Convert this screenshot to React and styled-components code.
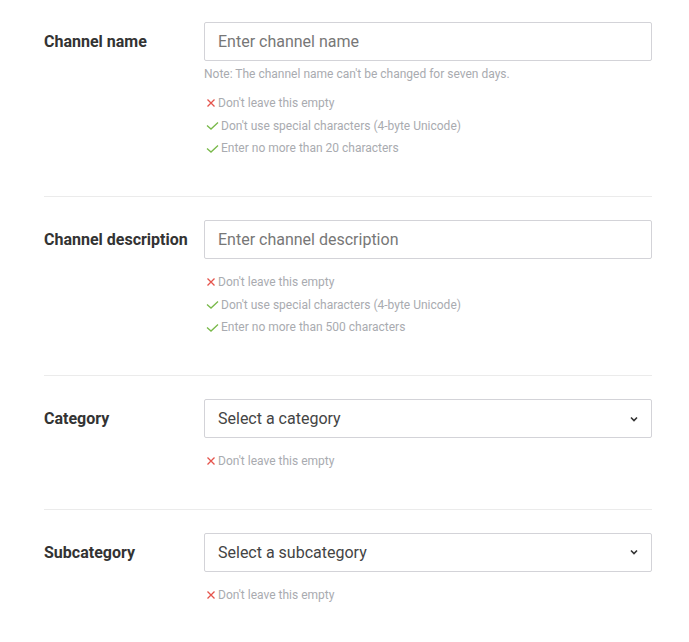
import styled, { createGlobalStyle } from "styled-components";

const Global = createGlobalStyle`
  body {
    margin: 0;
    background: #fff;
    font-family: Roboto, "Liberation Sans", sans-serif;
  }
`;

const Form = styled.div`
  padding: 0 37px 0 44px;
`;

const Section = styled.div`
  display: grid;
  grid-template-columns: 160px 1fr;
  padding: 23px 0 36px;
  border-bottom: 1px solid #ebebeb;
  &:first-child {
    padding-top: 22px;
  }
  &:last-child {
    border-bottom: none;
  }
`;

const Label = styled.div`
  height: 39px;
  display: flex;
  align-items: center;
  font-size: 16px;
  font-weight: 700;
  color: #333;
`;

const Field = styled.div`
  display: flex;
  flex-direction: column;
`;

const Box = styled.div`
  height: 39px;
  box-sizing: border-box;
  border: 1px solid #d3d3d8;
  border-radius: 2px;
  display: flex;
  align-items: center;
  justify-content: space-between;
  padding: 0 13px;
  font-size: 16px;
  color: ${(p) => (p.$select ? "#444" : "#777")};
`;

const Note = styled.div`
  margin-top: 3px;
  font-size: 12px;
  line-height: 20px;
  color: #a9abb0;
`;

const Rules = styled.ul`
  list-style: none;
  margin: ${(p) => (p.$afterNote ? "8px" : "12px")} 0 0;
  padding: 0;
`;

const Rule = styled.li`
  display: flex;
  align-items: center;
  gap: 2px;
  font-size: 12px;
  line-height: 22.67px;
  color: #a9abb0;
`;

const Mark = styled.svg`
  width: ${(p) => p.$w}px;
  height: 10px;
  margin-left: 2px;
  flex: none;
`;

const Cross = () => (
  <Mark $w={10} viewBox="0 0 10 10">
    <path d="M1.5 1.5 L8.5 8.5 M8.5 1.5 L1.5 8.5" stroke="#e5534b" strokeWidth="1.3" fill="none" />
  </Mark>
);

const Check = () => (
  <Mark $w={13} viewBox="0 0 13 10">
    <path d="M1 4.5 L5 8 L12 1.5" stroke="#79b94a" strokeWidth="1.3" fill="none" />
  </Mark>
);

const Chevron = () => (
  <svg width="8" height="6" viewBox="0 0 8 6">
    <path d="M1 1.5 L4 4.5 L7 1.5" stroke="#333" strokeWidth="1.6" fill="none" />
  </svg>
);

const sections = [
  {
    label: "Channel name",
    placeholder: "Enter channel name",
    note: "Note: The channel name can't be changed for seven days.",
    rules: [
      [false, "Don't leave this empty"],
      [true, "Don't use special characters (4-byte Unicode)"],
      [true, "Enter no more than 20 characters"],
    ],
  },
  {
    label: "Channel description",
    placeholder: "Enter channel description",
    rules: [
      [false, "Don't leave this empty"],
      [true, "Don't use special characters (4-byte Unicode)"],
      [true, "Enter no more than 500 characters"],
    ],
  },
  {
    label: "Category",
    placeholder: "Select a category",
    select: true,
    rules: [[false, "Don't leave this empty"]],
  },
  {
    label: "Subcategory",
    placeholder: "Select a subcategory",
    select: true,
    rules: [[false, "Don't leave this empty"]],
  },
];

export default function App() {
  return (
    <>
      <Global />
      <Form>
        {sections.map((s) => (
          <Section key={s.label}>
            <Label>{s.label}</Label>
            <Field>
              <Box $select={s.select}>
                <span>{s.placeholder}</span>
                {s.select && <Chevron />}
              </Box>
              {s.note && <Note>{s.note}</Note>}
              <Rules $afterNote={!!s.note}>
                {s.rules.map(([ok, text]) => (
                  <Rule key={text}>
                    {ok ? <Check /> : <Cross />}
                    {text}
                  </Rule>
                ))}
              </Rules>
            </Field>
          </Section>
        ))}
      </Form>
    </>
  );
}
